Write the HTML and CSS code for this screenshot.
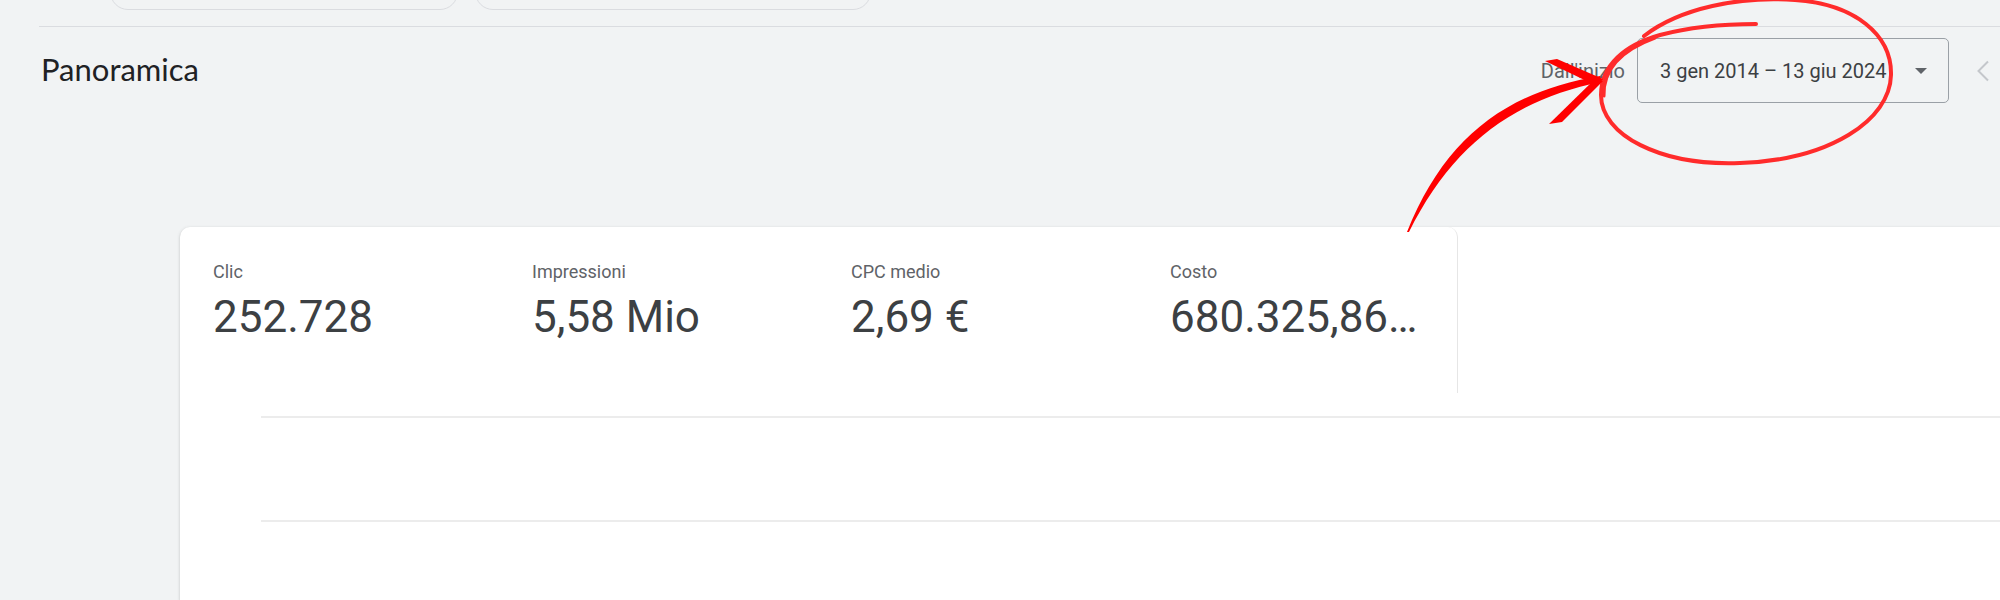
FILE: index.html
```html
<!DOCTYPE html>
<html lang="it">
<head>
<meta charset="utf-8">
<title>Panoramica</title>
<link rel="stylesheet" href="styles.css">
</head>
<body>
  <div class="filters">
    <div class="pill pill-a"></div>
    <div class="pill pill-b"></div>
  </div>
  <div class="divider"></div>

  <header class="header">
    <h1 class="title">Panoramica</h1>
    <div class="range">
      <span class="range-label">Dall'inizio</span>
      <div class="range-box">
        <span class="range-text">3 gen 2014 – 13 giu 2024</span>
        <svg class="range-caret" width="12" height="6" viewBox="0 0 12 6"><path d="M0 0 L12 0 L6 6 Z" fill="#5f6368"/></svg>
      </div>
      <svg class="range-prev" width="14" height="22" viewBox="0 0 14 22"><polyline points="12,1.5 2.5,11 12,20.5" fill="none" stroke="#c4c7cb" stroke-width="2"/></svg>
    </div>
  </header>

  <main class="panel">
    <div class="tabs">
      <div class="tab">
        <div class="metric">
          <div class="metric-label">Clic</div>
          <div class="metric-value">252.728</div>
        </div>
        <div class="metric">
          <div class="metric-label">Impressioni</div>
          <div class="metric-value">5,58 Mio</div>
        </div>
        <div class="metric">
          <div class="metric-label">CPC medio</div>
          <div class="metric-value">2,69 €</div>
        </div>
        <div class="metric">
          <div class="metric-label">Costo</div>
          <div class="metric-value">680.325,86…</div>
        </div>
      </div>
    </div>
    <div class="chart">
      <div class="gridline"></div>
      <div class="gridline"></div>
    </div>
  </main>

  <svg class="annotation" width="2000" height="600" viewBox="0 0 2000 600">
    <path d="M1644,36 C1680,8 1740,-4 1795,0 C1855,4 1892,35 1891,75 C1890,120 1830,160 1740,163 C1660,166 1601,135 1601,95 C1601,65 1625,45 1660,35 C1690,27 1725,24 1756,24"
          fill="none" stroke="#ff2b2b" stroke-width="4" stroke-linecap="round"/>
    <path d="M1604,96 C1603,68 1622,50 1655,38" fill="none" stroke="#ff2b2b" stroke-width="3" stroke-linecap="round"/>
    <path d="M1407,232 C1445,138 1505,92 1600,76 L1601,82 C1512,100 1452,146 1409,232 Z" fill="#ff0000"/>
    <path d="M1545,61 L1557,59 L1603,79 L1597,86 Z" fill="#ff0000"/>
    <path d="M1549,124 L1562,122 L1603,81 L1594,80 Z" fill="#ff0000"/>
  </svg>
</body>
</html>
```

FILE: styles.css
```css
html, body {
  margin: 0;
  padding: 0;
  overflow: hidden;
}

body {
  position: relative;
  width: 2000px;
  height: 600px;
  background: #f1f3f4;
  font-family: Roboto, "Liberation Sans", sans-serif;
  color: #3c4043;
}

.filters {
  height: 10px;
  overflow: hidden;
  display: flex;
  align-items: flex-end;
  gap: 17px;
  padding-left: 110px;
}

.pill {
  flex: none;
  height: 40px;
  box-sizing: border-box;
  border: 1px solid #dadce0;
  border-radius: 18px;
  background: #f1f3f4;
}

.pill-a { width: 348px; }
.pill-b { width: 396px; }

.divider {
  margin-top: 16px;
  margin-left: 39px;
  height: 1px;
  background: #dadce0;
}

.header {
  display: flex;
  align-items: center;
  justify-content: space-between;
  padding: 11px 10px 0 41px;
}

.title {
  margin: -3px 0 0 0;
  font-family: Lato, "Open Sans", sans-serif;
  font-weight: 400;
  font-size: 31px;
  color: #202124;
}

.range {
  display: flex;
  align-items: center;
}

.range-label {
  font-size: 20px;
  color: #5f6368;
}

.range-box {
  margin-left: 12px;
  width: 312px;
  height: 65px;
  box-sizing: border-box;
  border: 1px solid #9aa0a6;
  border-radius: 5px;
  display: flex;
  align-items: center;
  justify-content: space-between;
  padding: 0 21px 0 22px;
}

.range-text {
  font-size: 20px;
  color: #3c4043;
}

.range-caret {
  display: block;
}

.range-prev {
  display: block;
  margin-left: 27px;
}

.panel {
  margin-top: 124px;
  margin-left: 180px;
  background: #ffffff;
  border-top-left-radius: 10px;
  box-shadow: 0 1px 2px rgba(60, 64, 67, 0.2), 0 1px 3px 1px rgba(60, 64, 67, 0.08);
  height: 373px;
  overflow: hidden;
}

.tabs {
  display: flex;
}

.tab {
  width: 1278px;
  height: 166px;
  box-sizing: border-box;
  display: flex;
  padding: 33px 0 0 33px;
  border-right: 1px solid #e6e6e6;
  border-top-right-radius: 10px;
}

.metric {
  width: 319px;
  flex: none;
}

.metric-label {
  font-size: 18px;
  line-height: 24px;
  color: #5f6368;
}

.metric-value {
  margin-top: 7px;
  font-size: 44px;
  line-height: 52px;
  color: #3c4043;
  white-space: nowrap;
}

.chart {
  padding: 23px 0 0 81px;
  display: flex;
  flex-direction: column;
  gap: 102px;
}

.gridline {
  height: 2px;
  background: #ececec;
}

.annotation {
  position: absolute;
  top: 0;
  left: 0;
  pointer-events: none;
}
```
